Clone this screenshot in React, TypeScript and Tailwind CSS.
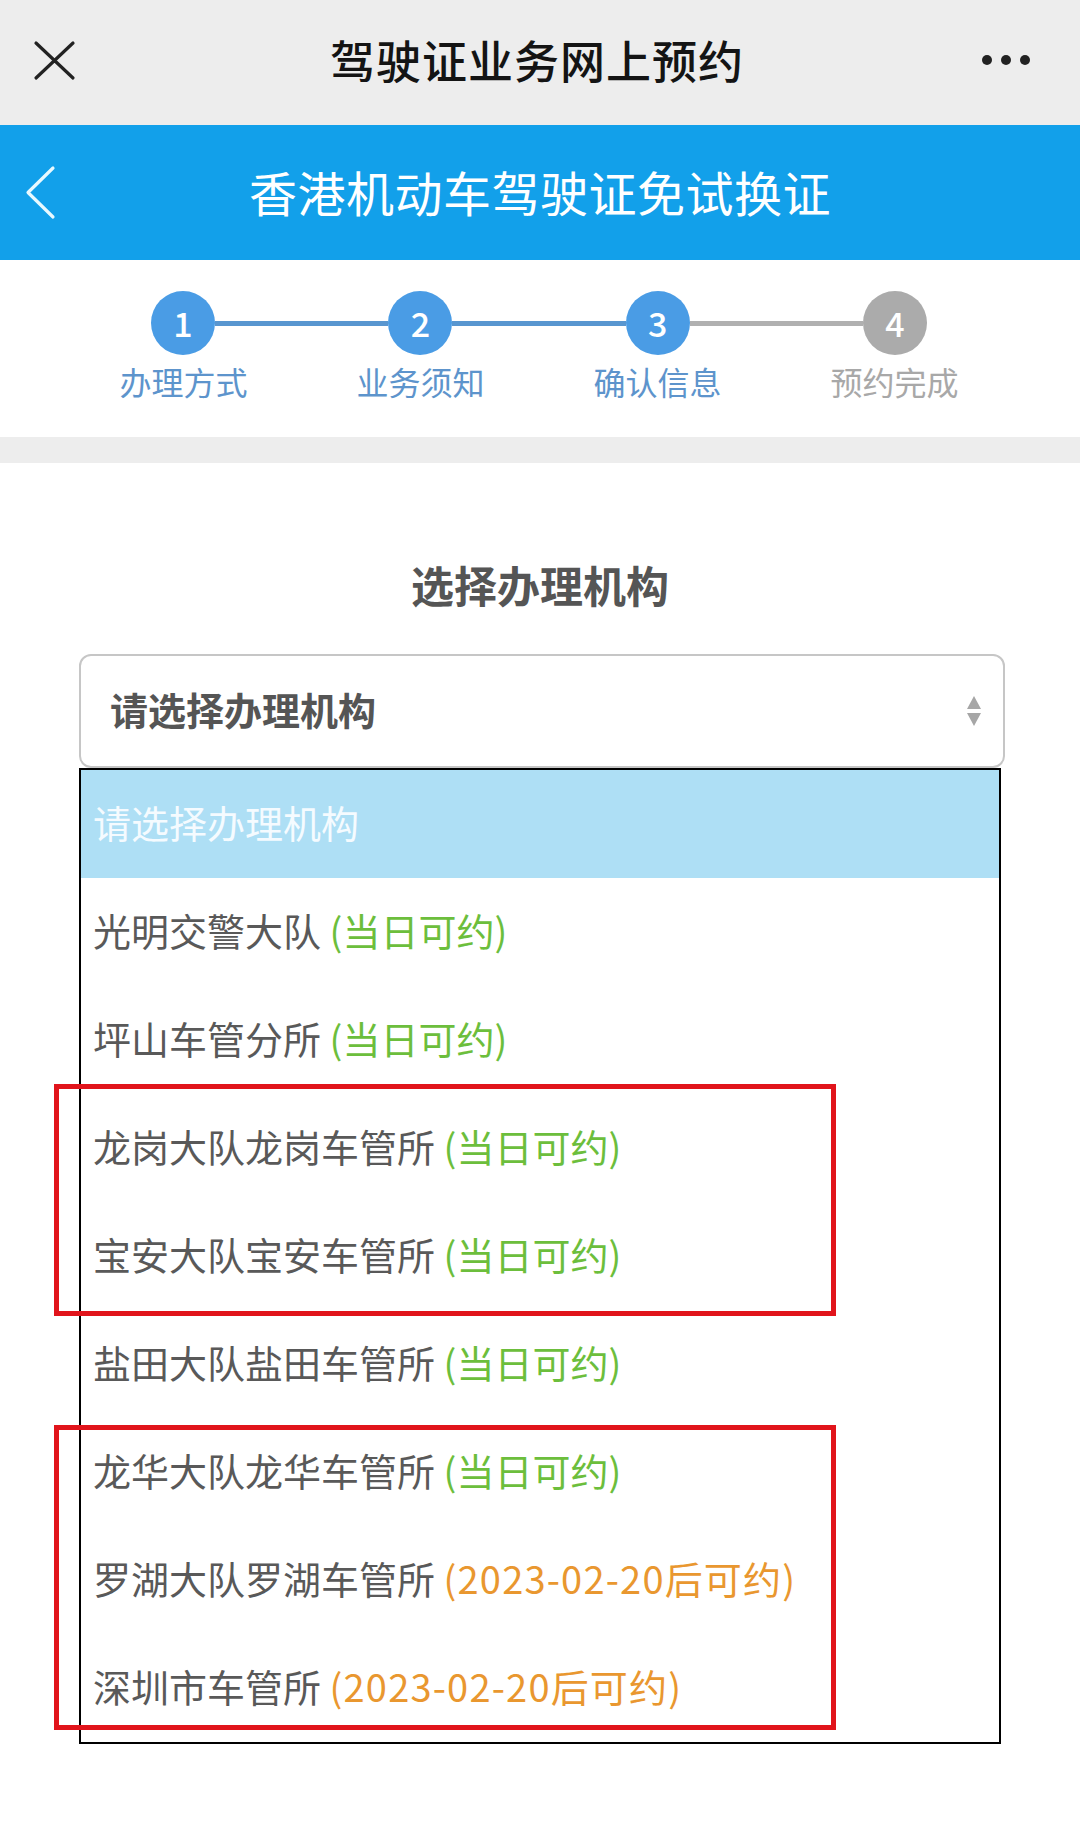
import React from 'react';

type Office = {
  name: string;
  note: string;
  kind: 'today' | 'later';
};

const offices: Office[] = [
  { name: '光明交警大队', note: '(当日可约)', kind: 'today' },
  { name: '坪山车管分所', note: '(当日可约)', kind: 'today' },
  { name: '龙岗大队龙岗车管所', note: '(当日可约)', kind: 'today' },
  { name: '宝安大队宝安车管所', note: '(当日可约)', kind: 'today' },
  { name: '盐田大队盐田车管所', note: '(当日可约)', kind: 'today' },
  { name: '龙华大队龙华车管所', note: '(当日可约)', kind: 'today' },
  { name: '罗湖大队罗湖车管所', note: '(2023-02-20后可约)', kind: 'later' },
  { name: '深圳市车管所', note: '(2023-02-20后可约)', kind: 'later' },
];

const steps = [
  { num: '1', label: '办理方式', done: true },
  { num: '2', label: '业务须知', done: true },
  { num: '3', label: '确认信息', done: true },
  { num: '4', label: '预约完成', done: false },
];

const StepCircle = ({ num, done }: { num: string; done: boolean }) => (
  <div
    className={`w-[64px] h-[64px] rounded-full flex items-center justify-center text-white text-[34px] leading-none font-medium shrink-0 ${
      done ? 'bg-[#4a9ce5]' : 'bg-[#ababab]'
    }`}
  >
    {num}
  </div>
);

const App: React.FC = () => {
  return (
    <div
      className="relative w-[1080px] h-[1825px] bg-white overflow-hidden"
      style={{ fontFamily: '"Noto Sans CJK SC", "Noto Sans", sans-serif' }}
    >
      {/* WeChat title bar */}
      <div className="relative h-[125px] bg-[#ededed] flex items-center justify-center">
        <svg className="absolute left-[30px] top-[37px]" width="50" height="48" viewBox="0 0 50 48">
          <path d="M6 6 L43 41 M43 6 L6 41" stroke="#222" strokeWidth="3.2" strokeLinecap="round" fill="none" />
        </svg>
        <h1 className="text-[45px] leading-none font-medium text-[#141414] tracking-[1px] mt-[-7px] mr-[6px]">
          驾驶证业务网上预约
        </h1>
        <div className="absolute right-[50px] top-[55px] flex gap-[9px]">
          <span className="w-[10px] h-[10px] rounded-full bg-[#222]" />
          <span className="w-[10px] h-[10px] rounded-full bg-[#222]" />
          <span className="w-[10px] h-[10px] rounded-full bg-[#222]" />
        </div>
      </div>

      {/* Blue page header */}
      <div className="relative h-[135px] bg-[#12a0ea] flex items-center justify-center">
        <svg className="absolute left-[22px] top-[40px]" width="40" height="56" viewBox="0 0 40 56">
          <path d="M31 3 L6 27.5 L31 52" stroke="#e8f9ff" strokeWidth="3.2" strokeLinecap="round" strokeLinejoin="round" fill="none" />
        </svg>
        <h2 className="text-[48px] leading-none text-white tracking-[0.5px] mt-[-4px]">香港机动车驾驶证免试换证</h2>
      </div>

      {/* Steps */}
      <div className="h-[177px] pt-[31px]">
        <div className="flex items-center ml-[151px] w-[776px]">
          {steps.map((s, i) => (
            <React.Fragment key={s.num}>
              <StepCircle num={s.num} done={s.done} />
              {i < steps.length - 1 && (
                <div
                  className={`flex-1 h-[5px] ${
                    steps[i + 1].done ? 'bg-[#5896d0]' : 'bg-[#b0b0b0]'
                  }`}
                />
              )}
            </React.Fragment>
          ))}
        </div>
        <div className="grid grid-cols-4 ml-[65px] w-[948px] mt-[6px]">
          {steps.map((s) => (
            <div
              key={s.num}
              className={`text-center text-[32px] leading-[40px] ${
                s.done ? 'text-[#5d94cc]' : 'text-[#a8a8a8]'
              }`}
            >
              {s.label}
            </div>
          ))}
        </div>
      </div>

      <div className="h-[26px] bg-[#ededed]" />

      {/* Content */}
      <div className="pt-[91px]">
        <h3 className="text-center text-[43px] leading-[60px] font-bold text-[#555]">选择办理机构</h3>

        <div className="mt-[40px] ml-[79px] w-[926px] h-[114px] border-2 border-[#c6c6c6] rounded-[12px] flex items-center justify-between pl-[29px] pr-[21px]">
          <span className="text-[38px] leading-none font-bold text-[#555] mt-[-4px]">请选择办理机构</span>
          <svg width="16" height="32" viewBox="0 0 16 32">
            <path d="M8 1 L15 14 L1 14 Z" fill="#a6a6a6" />
            <path d="M8 31 L15 18 L1 18 Z" fill="#a6a6a6" />
          </svg>
        </div>

        <div className="ml-[79px] w-[922px] border-2 border-black">
          <div className="h-[108px] bg-[#aedff5] flex items-center pl-[12px] pb-[6px] text-[38px] text-[#f5fbff]">
            请选择办理机构
          </div>
          {offices.map((o) => (
            <div key={o.name} className="h-[108px] flex items-center pl-[12px] pb-[6px] text-[38px] text-[#595959] whitespace-pre">
              {o.name}{' '}
              <span
                className={
                  o.kind === 'today' ? 'text-[#6cbe3c]' : 'text-[#e9972f] tracking-[1.2px]'
                }
              >
                {o.note}
              </span>
            </div>
          ))}
        </div>
      </div>

      {/* Red annotation boxes */}
      <div className="absolute left-[54px] top-[1084px] w-[782px] h-[232px] border-[5px] border-[#e1141b]" />
      <div className="absolute left-[54px] top-[1425px] w-[782px] h-[305px] border-[5px] border-[#e1141b]" />
    </div>
  );
};

export default App;
